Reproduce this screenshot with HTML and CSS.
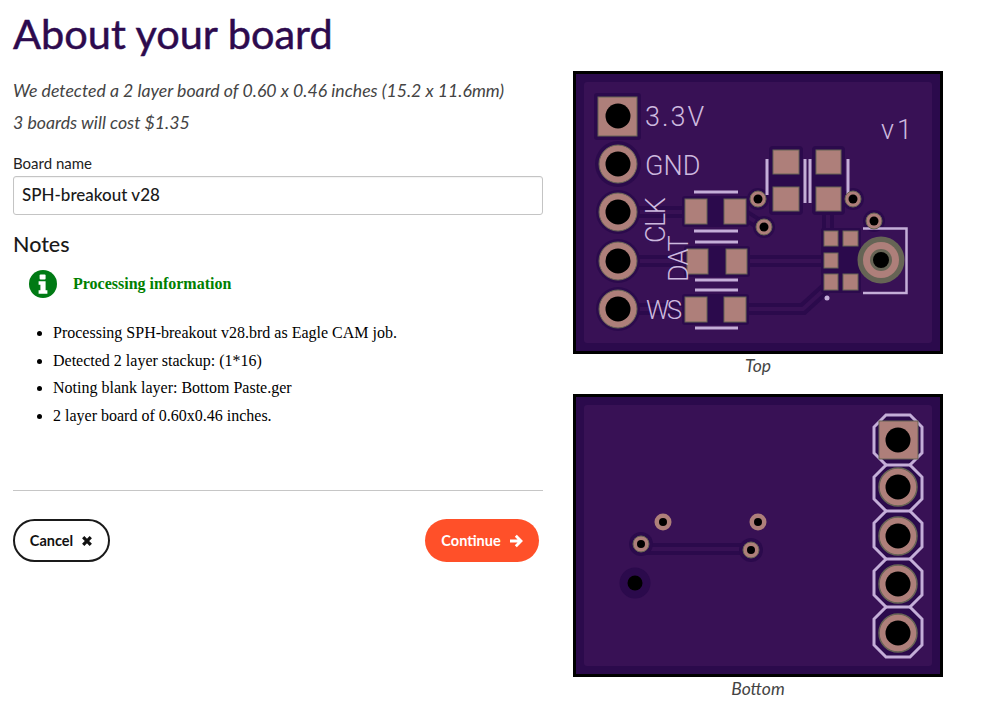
FILE: index.html
```html
<!DOCTYPE html>
<html lang="en">
<head>
<meta charset="utf-8">
<title>About your board</title>
<link rel="stylesheet" href="styles.css">
</head>
<body>
<h1 class="title">About your board</h1>
<div class="page">
  <main class="main">
    <p class="lead">We detected a 2 layer board of 0.60 x 0.46 inches (15.2 x 11.6mm)</p>
    <p class="lead lead-cost">3 boards will cost $1.35</p>
    <label class="label" for="name">Board name</label>
    <input class="input" id="name" type="text" value="SPH-breakout v28">
    <h2 class="notes-title">Notes</h2>
    <div class="info">
      <svg class="info-icon" viewBox="0 0 28 28" aria-hidden="true">
        <circle class="info-disc" cx="14" cy="14" r="14"/>
        <rect class="info-glyph" x="10.6" y="4.4" width="6" height="5" rx="1"/>
        <path class="info-glyph" d="M9.6 11.2h7v9h1.8v3.6H9.6v-3.6h1.8v-5.4H9.6z"/>
      </svg>
      <span class="info-text">Processing information</span>
    </div>
    <ul class="log">
      <li>Processing SPH-breakout v28.brd as Eagle CAM job.</li>
      <li>Detected 2 layer stackup: (1*16)</li>
      <li>Noting blank layer: Bottom Paste.ger</li>
      <li>2 layer board of 0.60x0.46 inches.</li>
    </ul>
    <hr class="rule">
    <div class="actions">
      <button class="btn btn-cancel" type="button">Cancel
        <svg class="btn-icon" viewBox="0 0 12 12" aria-hidden="true"><path class="x-mark" d="M2.2 2.2l7.6 7.600M9.800 2.2l-7.600 7.600"/></svg>
      </button>
      <button class="btn btn-continue" type="button">Continue
        <svg class="btn-icon btn-icon-arrow" viewBox="0 0 14 14" aria-hidden="true"><path class="arrow-mark" d="M1 7h10.500M6.800 1.800l5.200 5.200-5.200 5.200"/></svg>
      </button>
    </div>
  </main>
  <aside class="boards">
    <figure class="board">
      <svg class="pcb" viewBox="573 71 370 283" role="img" aria-label="Top of board">
        <rect class="pcb-edge" x="574.5" y="72.5" width="367" height="280"/>
        <rect class="pcb-fill" x="584" y="82" width="348" height="261" rx="3"/>
        <g class="clear">
          <path d="M618 212H690M618 261H690M618 309H690"/>
          <path d="M740 212L764 227M740 261H830M740 309H803L826 288"/>
          <path d="M828 205V235"/>
        </g>
        <g class="trace">
          <path d="M618 212H690M618 261H690M618 309H690"/>
          <path d="M740 212L764 227M740 261H830M740 309H803L826 288"/>
          <path d="M828 205V235"/>
        </g>
        <rect class="halo" x="594" y="93" width="47" height="47" rx="3"/>
        <rect class="halo" x="682" y="196" width="67" height="31" rx="3"/>
        <rect class="halo" x="684" y="246" width="66" height="31" rx="3"/>
        <rect class="halo" x="682" y="294" width="67" height="31" rx="3"/>
        <rect class="halo" x="769" y="146" width="34" height="69" rx="4"/>
        <rect class="halo" x="812" y="146" width="33" height="69" rx="4"/>
        <rect class="halo" x="821" y="228" width="40" height="65" rx="2"/>
        <circle class="halo" cx="618" cy="164" r="23"/>
        <circle class="halo" cx="618" cy="212" r="22"/>
        <circle class="halo" cx="618" cy="261" r="22"/>
        <circle class="halo" cx="618" cy="309" r="22"/>
        <circle class="halo" cx="758" cy="199" r="11"/>
        <circle class="halo" cx="764" cy="227" r="11"/>
        <circle class="halo" cx="853" cy="199" r="11"/>
        <circle class="halo" cx="874" cy="221" r="11"/>
        <path class="silk" d="M694 192H738M694 231H738M695 242H738M695 280H738M695 290H738M695 328H738M767 159V195M805 159V203M810 159V203M848 159V195"/>
        <path class="silk-thin" d="M863 228.500H906.500V293H863"/>
        <circle class="silk-dot" cx="827" cy="298" r="2.500"/>
        <rect class="pad" x="598" y="97" width="39" height="39"/>
        <circle class="ring" cx="618" cy="164" r="19"/>
        <circle class="ring" cx="618" cy="212" r="19"/>
        <circle class="ring" cx="618" cy="261" r="19"/>
        <circle class="ring" cx="618" cy="309" r="19"/>
        <circle class="hole" cx="618" cy="116" r="12.500"/>
        <circle class="hole" cx="618" cy="164" r="12.500"/>
        <circle class="hole" cx="618" cy="212" r="12.500"/>
        <circle class="hole" cx="618" cy="261" r="12.500"/>
        <circle class="hole" cx="618" cy="309" r="12.500"/>
        <rect class="pad" x="685" y="199" width="22" height="25"/>
        <rect class="pad" x="724" y="199" width="22" height="25"/>
        <rect class="pad" x="687" y="249" width="21" height="25"/>
        <rect class="pad" x="726" y="249" width="21" height="25"/>
        <rect class="pad" x="685" y="297" width="22" height="25"/>
        <rect class="pad" x="724" y="297" width="22" height="25"/>
        <rect class="pad" x="773" y="150" width="26" height="24"/>
        <rect class="pad" x="773" y="187" width="26" height="24"/>
        <rect class="pad" x="816" y="150" width="25" height="24"/>
        <rect class="pad" x="816" y="187" width="25" height="24"/>
        <rect class="pad" x="824" y="231" width="14" height="15"/>
        <rect class="pad" x="843" y="231" width="15" height="15"/>
        <rect class="pad" x="824" y="253" width="14" height="15"/>
        <rect class="pad" x="824" y="274" width="14" height="16"/>
        <rect class="pad" x="843" y="274" width="15" height="16"/>
        <circle class="ring" cx="758" cy="199" r="8"/>
        <circle class="ring" cx="764" cy="227" r="8"/>
        <circle class="ring" cx="853" cy="199" r="8"/>
        <circle class="ring" cx="874" cy="221" r="8"/>
        <circle class="hole" cx="758" cy="199" r="4.500"/>
        <circle class="hole" cx="764" cy="227" r="4.500"/>
        <circle class="hole" cx="853" cy="199" r="4.500"/>
        <circle class="hole" cx="874" cy="221" r="4.500"/>
        <circle class="mask-grey" cx="881" cy="260" r="23.500"/>
        <circle class="copper" cx="881" cy="260" r="18"/>
        <circle class="mask-grey" cx="881" cy="260" r="11"/>
        <circle class="hole" cx="881" cy="260" r="8"/>
        <text class="legend legend-33" x="645" y="126">3.3V</text>
        <text class="legend legend-gnd" x="645" y="175">GND</text>
        <text class="legend legend-ws" x="646" y="319">WS</text>
        <text class="legend legend-v1" x="881" y="139">v1</text>
        <text class="legend legend-clk" transform="translate(665 243) rotate(-90)">CLK</text>
        <text class="legend legend-dat" transform="translate(688 282) rotate(-90)">DAT</text>
      </svg>
      <figcaption class="caption">Top</figcaption>
    </figure>
    <figure class="board board-bottom">
      <svg class="pcb" viewBox="573 394 370 283" role="img" aria-label="Bottom of board">
        <rect class="pcb-edge" x="574.500" y="395.500" width="367" height="280"/>
        <rect class="pcb-fill" x="584" y="405" width="348" height="261" rx="3"/>
        <path class="clear" d="M641 544L647 549H751"/>
        <path class="trace" d="M641 544L647 549H751"/>
        <circle class="halo" cx="641" cy="544" r="12"/>
        <circle class="halo" cx="751" cy="550" r="12"/>
        <circle class="halo" cx="635" cy="583" r="15.500"/>
        <circle class="hole" cx="635" cy="583" r="7.500"/>
        <path class="silk silk-outline" d="M886 415H910L922 427V453L910 465L922 477V499L910 511L922 523V547L910 559L922 571V595L910 607L922 619V645L910 657H886L874 645V619L886 607L874 595V571L886 559L874 547V523L886 511L874 499V477L886 465L874 453V427Z"/>
        <path class="silk" d="M886 465H910M886 511H910M886 559H910M886 607H910"/>
        <circle class="halo-ring" cx="898" cy="487" r="19"/>
        <circle class="halo-ring" cx="898" cy="536" r="19"/>
        <circle class="halo-ring" cx="898" cy="584" r="19"/>
        <circle class="halo-ring" cx="898" cy="633" r="19"/>
        <rect class="pad" x="879" y="421" width="39" height="38"/>
        <circle class="hole" cx="898" cy="440" r="12.500"/>
        <circle class="hole" cx="898" cy="487" r="12.500"/>
        <circle class="hole" cx="898" cy="536" r="12.500"/>
        <circle class="hole" cx="898" cy="584" r="12.500"/>
        <circle class="hole" cx="898" cy="633" r="12.500"/>
        <circle class="ring-plain" cx="663" cy="522" r="8.500"/>
        <circle class="ring-plain" cx="758" cy="522" r="8.500"/>
        <circle class="ring" cx="641" cy="544" r="8"/>
        <circle class="ring" cx="751" cy="550" r="8"/>
        <circle class="hole" cx="663" cy="522" r="4"/>
        <circle class="hole" cx="758" cy="522" r="4"/>
        <circle class="hole" cx="641" cy="544" r="4"/>
        <circle class="hole" cx="751" cy="550" r="4"/>
      </svg>
      <figcaption class="caption">Bottom</figcaption>
    </figure>
  </aside>
</div>
</body>
</html>
```
FILE: styles.css
```css
* { box-sizing: border-box; }
html, body { margin: 0; padding: 0; }
body {
  background: #fff;
  color: #111;
  font-family: "Lato", "Noto Sans", sans-serif;
  height: 721px;
  overflow: hidden;
}
.title {
  margin: 0;
  padding: 8px 0 0 13px;
  height: 70px;
  font-size: 41.500px;
  line-height: 50px;
  font-weight: 400;
  -webkit-text-stroke: .5px #2d0a4e;
  color: #2d0a4e;
}
.page {
  display: flex;
  padding-left: 13px;
  gap: 30px;
  align-items: flex-start;
}
.main { width: 530px; }
.lead {
  margin: 10px 0 0;
  font-size: 17.700px;
  line-height: 22px;
  font-style: italic;
  color: #444;
}
.lead-cost { margin-top: 10px; }
.label {
  display: block;
  margin-top: 20px;
  font-size: 15px;
  line-height: 18px;
  color: #222;
}
.input {
  display: block;
  width: 530px;
  height: 39px;
  margin-top: 4px;
  padding: 0 8px 2px;
  border: 1px solid #c4c4c4;
  border-radius: 3px;
  font: 500 17px "Lato", sans-serif;
  color: #1a1a1a;
  box-shadow: inset 0 1px 1px rgba(0,0,0,.05);
}
.notes-title {
  margin: 17px 0 0;
  font-size: 21.500px;
  line-height: 24px;
  font-weight: 500;
  color: #1a1a1a;
}
.info {
  display: flex;
  align-items: center;
  margin-top: 14px;
  padding-left: 16px;
  height: 28px;
}
.info-icon { width: 28px; height: 28px; flex: none; }
.info-disc { fill: #007a14; }
.info-glyph { fill: #fff; }
.info-text {
  margin-left: 16px;
  font: bold 16px "Liberation Serif", serif;
  color: #008000;
}
.log {
  margin: 21px 0 0;
  padding: 0 0 0 40px;
  list-style: disc;
  font: 16px/27.600px "Liberation Serif", serif;
  color: #000;
}
.rule {
  margin: 61px 0 0;
  border: 0;
  border-top: 1px solid #c6c6c6;
}
.actions {
  display: flex;
  justify-content: space-between;
  margin-top: 28px;
  padding-right: 4px;
}
.btn {
  display: flex;
  align-items: center;
  gap: 8px;
  height: 43px;
  border-radius: 22px;
  font: 700 14.500px "Lato", sans-serif;
  padding: 0;
  justify-content: center;
}
.btn-cancel { width: 97px; background: #fff; border: 2px solid #1a1a1a; color: #111; }
.btn-continue { width: 114px; background: #ff5029; border: 0; color: #fff; }
.btn-icon { width: 12px; height: 12px; flex: none; }
.btn-icon-arrow { width: 14px; height: 14px; }
.x-mark { fill: none; stroke: #111; stroke-width: 3.200; }
.arrow-mark { fill: none; stroke: #fff; stroke-width: 2.800; }
.boards { width: 370px; margin-top: 1px; }
.board { margin: 0; }
.board-bottom { margin-top: 18px; }
.pcb { display: block; width: 370px; height: 283px; }
.pcb-edge { fill: #2b0a4c; stroke: #000; stroke-width: 3; }
.pcb-fill { fill: #381155; }
.clear { fill: none; stroke: #2b0a4c; stroke-width: 12; }
.trace { fill: none; stroke: #381155; stroke-width: 4; }
.halo { fill: #2b0a4c; }
.silk { fill: none; stroke: #c4aed8; stroke-width: 3; }
.silk-outline { fill: #2b0a4c; }
.silk-thin { fill: none; stroke: #c4aed8; stroke-width: 2.500; }
.silk-dot { fill: #c4aed8; }
.pad { fill: #ae7f7a; stroke: #666455; stroke-width: 1; }
.ring { fill: #ae7f7a; stroke: #666455; stroke-width: 1; }
.ring-plain { fill: #ae7f7a; }
.halo-ring { fill: #ae7f7a; stroke: #666455; stroke-width: 1.500; }
.copper { fill: #ae7f7a; }
.mask-grey { fill: #666455; }
.hole { fill: #000; }
.legend {
  fill: #cdb9df;
  font-family: "Roboto", sans-serif;
  font-weight: 300;
  font-size: 27px;
}
.legend-33 { letter-spacing: 2px; }
.legend-gnd { letter-spacing: 0; }
.legend-v1 { letter-spacing: 3px; }
.legend-ws { letter-spacing: -2.500px; font-size: 26px; }
.legend-clk { letter-spacing: -1.500px; }
.legend-dat { letter-spacing: -1px; }
.caption {
  margin-top: 2px;
  text-align: center;
  font-size: 17.500px;
  line-height: 20px;
  font-style: italic;
  color: #444;
}
```
